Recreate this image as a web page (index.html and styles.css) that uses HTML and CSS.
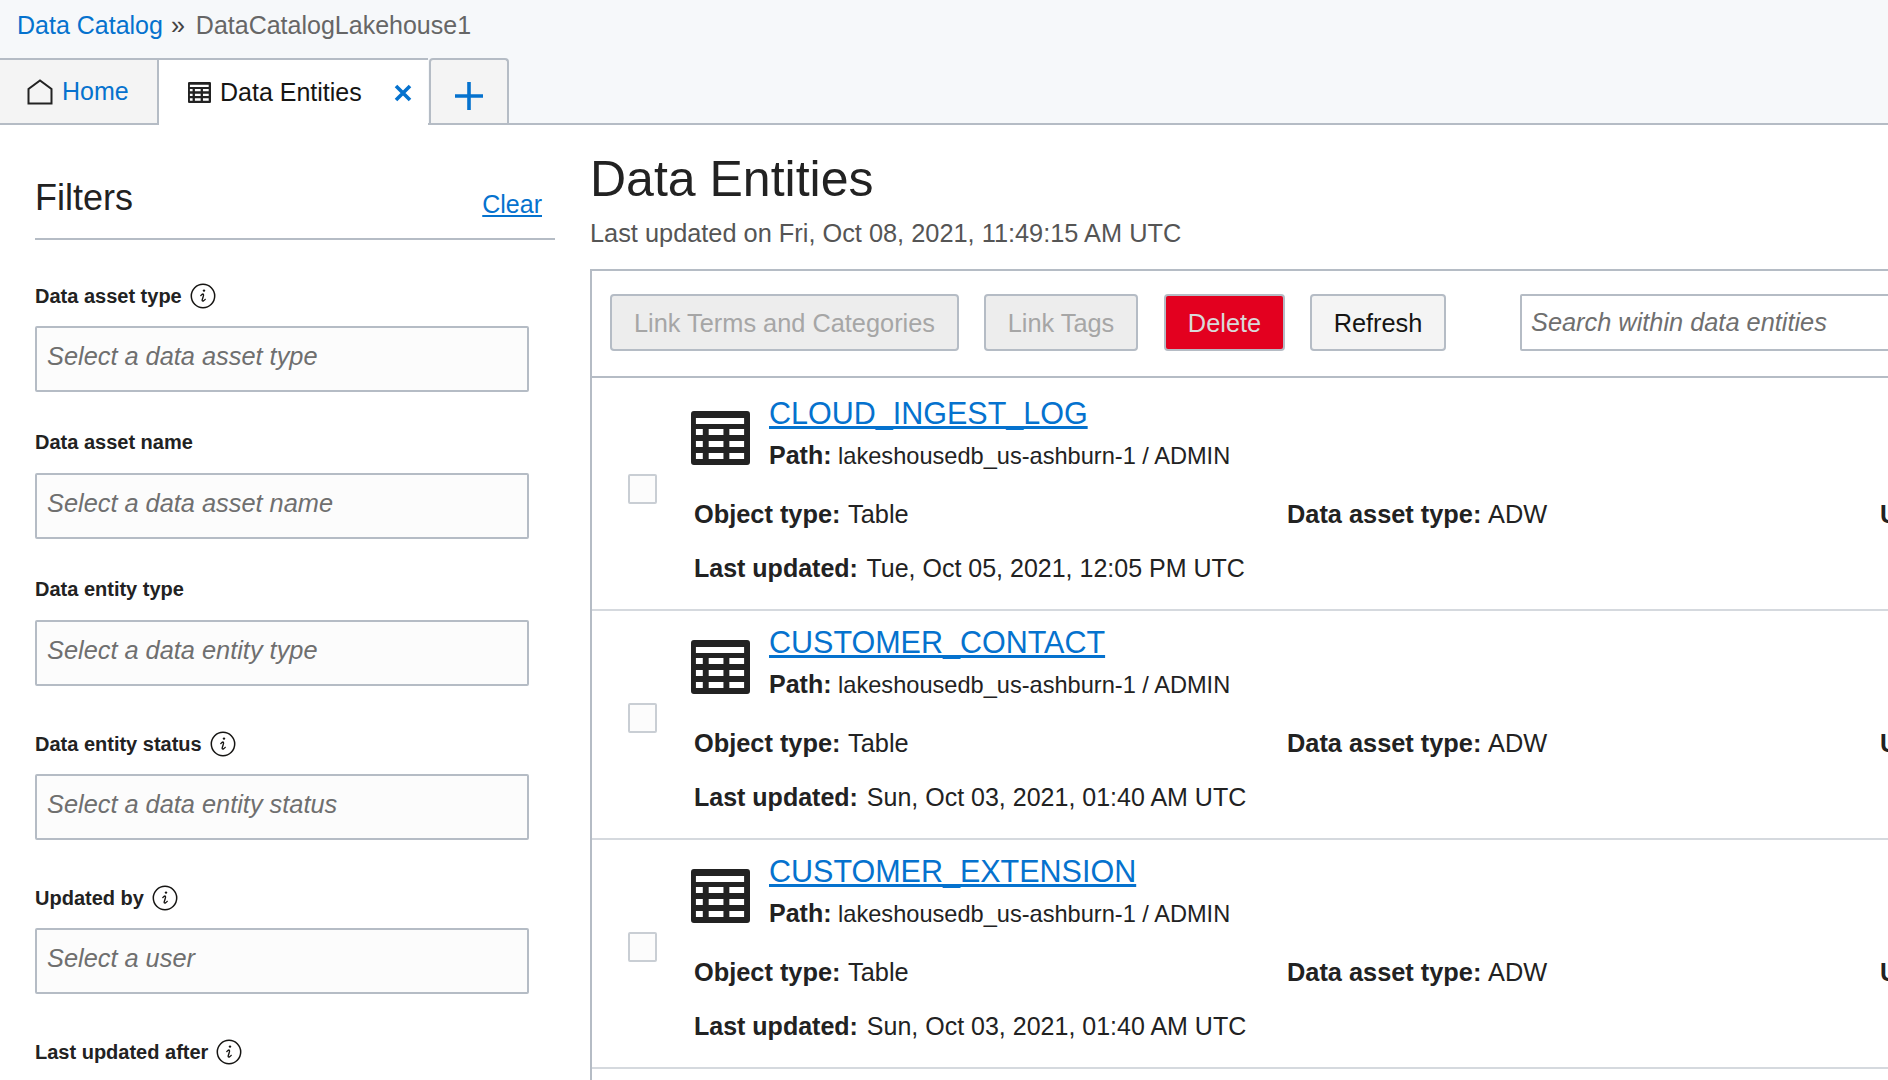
FILE: index.html
```html
<!DOCTYPE html>
<html lang="en">
<head>
    <meta charset="UTF-8">
    <meta name="viewport" content="width=device-width, initial-scale=1.0">
    <title>Data Entities</title>
    <link rel="stylesheet" href="styles.css">
</head>
<body>
    <svg class="defs" width="0" height="0">
        <symbol id="table-icon" viewBox="0 0 60 54" preserveAspectRatio="none">
            <path fill-rule="evenodd" fill="#222" d="M3 0H57Q60 0 60 3V51Q60 54 57 54H3Q0 54 0 51V3Q0 0 3 0ZM5 7V13H54V7ZM5 18V24H12V18ZM18 18V24H33V18ZM39 18V24H54V18ZM5 30V36H12V30ZM18 30V36H33V30ZM39 30V36H54V30ZM5 42V48H12V42ZM18 42V48H33V42ZM39 42V48H54V42Z"/>
        </symbol>
        <symbol id="info-icon" viewBox="0 0 26 26">
            <circle cx="13" cy="13" r="11.7" fill="none" stroke="#161513" stroke-width="1.5"/>
            <circle cx="14" cy="7.6" r="1.2" fill="#161513"/>
            <path d="M10.8 12.6Q12.6 10.6 13.4 11.2Q13.9 11.8 13 14.2L12.2 16.8Q12 18.4 13.2 18Q14.2 17.6 15.2 16.4" fill="none" stroke="#161513" stroke-width="1.4" stroke-linecap="round"/>
        </symbol>
    </svg>

    <div class="top">
        <div class="crumbs">
            <a href="#">Data Catalog</a>
            <span class="crumb-sep">»</span>
            <span class="crumb-current">DataCatalogLakehouse1</span>
        </div>
        <div class="tabs">
            <a href="#" class="tab tab-home">
                <svg class="home-icon" viewBox="0 0 26 26" width="26" height="26"><path d="M1.5 24.5V10L13 1.5L24.5 10V24.5Z" fill="none" stroke="#222" stroke-width="2"/></svg>
                Home
            </a>
            <div class="tab tab-active">
                <svg class="tab-table" width="23" height="21"><use href="#table-icon"/></svg>
                <span>Data Entities</span>
                <svg class="tab-close" viewBox="0 0 18 18" width="18" height="18"><path d="M2 2L16 16M16 2L2 16" stroke="#0572ce" stroke-width="3.6"/></svg>
            </div>
            <div class="tab tab-add">
                <svg viewBox="0 0 30 30" width="30" height="30"><path d="M15 1V29M1 15H29" stroke="#0572ce" stroke-width="3.6"/></svg>
            </div>
        </div>
    </div>

    <div class="page">
        <div class="filters">
            <div class="filters-head">
                <h2>Filters</h2>
                <a href="#">Clear</a>
            </div>
            <div class="filter">
                <label class="with-info">Data asset type <svg width="26" height="26"><use href="#info-icon"/></svg></label>
                <input type="text" placeholder="Select a data asset type">
            </div>
            <div class="filter">
                <label>Data asset name</label>
                <input type="text" placeholder="Select a data asset name">
            </div>
            <div class="filter">
                <label>Data entity type</label>
                <input type="text" placeholder="Select a data entity type">
            </div>
            <div class="filter">
                <label class="with-info">Data entity status <svg width="26" height="26"><use href="#info-icon"/></svg></label>
                <input type="text" placeholder="Select a data entity status">
            </div>
            <div class="filter">
                <label class="with-info">Updated by <svg width="26" height="26"><use href="#info-icon"/></svg></label>
                <input type="text" placeholder="Select a user">
            </div>
            <div class="filter">
                <label class="with-info">Last updated after <svg width="26" height="26"><use href="#info-icon"/></svg></label>
            </div>
        </div>

        <div class="main">
            <h1>Data Entities</h1>
            <p class="updated">Last updated on Fri, Oct 08, 2021, 11:49:15 AM UTC</p>
            <div class="panel">
                <div class="toolbar">
                    <button class="btn btn-terms" disabled>Link Terms and Categories</button>
                    <button class="btn btn-tags" disabled>Link Tags</button>
                    <button class="btn btn-delete">Delete</button>
                    <button class="btn btn-refresh">Refresh</button>
                    <input class="search" type="text" placeholder="Search within data entities">
                </div>

                <div class="row">
                    <input class="check" type="checkbox">
                    <div class="row-body">
                        <div class="row-title">
                            <svg class="row-icon" width="59" height="54"><use href="#table-icon"/></svg>
                            <div>
                                <a href="#" class="row-link">CLOUD_INGEST_LOG</a>
                                <div class="row-path"><b>Path:</b> lakeshousedb_us-ashburn-1 / ADMIN</div>
                            </div>
                        </div>
                        <div class="row-meta">
                            <div><b>Object type:</b> Table</div>
                            <div><b>Data asset type:</b> ADW</div>
                            <div><b>Updated by:</b></div>
                        </div>
                        <div class="row-last"><b>Last updated:</b> Tue, Oct 05, 2021, 12:05 PM UTC</div>
                    </div>
                </div>

                <div class="row">
                    <input class="check" type="checkbox">
                    <div class="row-body">
                        <div class="row-title">
                            <svg class="row-icon" width="59" height="54"><use href="#table-icon"/></svg>
                            <div>
                                <a href="#" class="row-link">CUSTOMER_CONTACT</a>
                                <div class="row-path"><b>Path:</b> lakeshousedb_us-ashburn-1 / ADMIN</div>
                            </div>
                        </div>
                        <div class="row-meta">
                            <div><b>Object type:</b> Table</div>
                            <div><b>Data asset type:</b> ADW</div>
                            <div><b>Updated by:</b></div>
                        </div>
                        <div class="row-last"><b>Last updated:</b> Sun, Oct 03, 2021, 01:40 AM UTC</div>
                    </div>
                </div>

                <div class="row">
                    <input class="check" type="checkbox">
                    <div class="row-body">
                        <div class="row-title">
                            <svg class="row-icon" width="59" height="54"><use href="#table-icon"/></svg>
                            <div>
                                <a href="#" class="row-link">CUSTOMER_EXTENSION</a>
                                <div class="row-path"><b>Path:</b> lakeshousedb_us-ashburn-1 / ADMIN</div>
                            </div>
                        </div>
                        <div class="row-meta">
                            <div><b>Object type:</b> Table</div>
                            <div><b>Data asset type:</b> ADW</div>
                            <div><b>Updated by:</b></div>
                        </div>
                        <div class="row-last"><b>Last updated:</b> Sun, Oct 03, 2021, 01:40 AM UTC</div>
                    </div>
                </div>
            </div>
        </div>
    </div>
</body>
</html>
```

FILE: styles.css
```css
html, body {
    height: 100%;
}
body {
    margin: 0;
    height: 1080px;
    overflow: hidden;
    background-color: #fff;
    color: #222;
    font-family: "Liberation Sans", Arial, sans-serif;
    font-size: 25.35px;
}
a {
    color: #0572ce;
}
.defs {
    position: absolute;
}

/* breadcrumb and tabs */
.top {
    height: 125px;
    box-sizing: border-box;
    background-color: #f6f8fa;
    border-bottom: 2px solid #b5bcc5;
    font-size: 25px;
}
.crumbs {
    height: 58px;
    box-sizing: border-box;
    padding: 10px 0 0 17px;
    line-height: 30px;
    display: flex;
}
.crumbs a {
    text-decoration: none;
}
.crumb-sep {
    margin: 0 11px 0 8px;
    color: #444;
}
.crumb-current {
    color: #666;
}
.tabs {
    display: flex;
    height: 67px;
    align-items: stretch;
}
.tab {
    display: flex;
    align-items: center;
    box-sizing: border-box;
    height: 65px;
    border-top: 2px solid #b5bcc5;
}
.tab-home {
    width: 159px;
    padding: 0 0 0 27px;
    gap: 9px;
    background-color: #f4f4f4;
    border-right: 2px solid #b5bcc5;
    text-decoration: none;
}
.tab-active {
    width: 269px;
    height: 67px;
    padding: 0 0 0 29px;
    background-color: #fff;
    color: #161513;
}
.tab-table {
    margin-right: 9px;
}
.tab-close {
    margin-left: 32px;
}
.tab-add {
    width: 80px;
    margin-left: 1px;
    justify-content: center;
    background-color: #f4f4f4;
    border: 2px solid #b5bcc5;
    border-bottom: none;
    border-radius: 4px 4px 0 0;
    padding-top: 8px;
}

/* page columns */
.page {
    display: flex;
}
.filters {
    width: 520px;
    margin-left: 35px;
    flex-shrink: 0;
}
.filters-head {
    height: 115px;
    box-sizing: border-box;
    display: flex;
    justify-content: space-between;
    align-items: flex-end;
    padding-bottom: 19px;
    border-bottom: 2px solid #b5bcc5;
    padding-right: 13px;
    margin-bottom: -2px;
}
.filters-head h2 {
    margin: 0;
    font-size: 36px;
    font-weight: normal;
}
.filters-head a {
    font-size: 25px;
}
.filter {
    width: 494px;
}
.filter label {
    display: flex;
    align-items: center;
    gap: 8px;
    height: 24px;
    font-size: 20px;
    font-weight: bold;
    margin-top: 38px;
    margin-bottom: 19px;
}
.filter label.with-info {
    height: 30px;
    margin-top: 43px;
    margin-bottom: 15px;
}
.filter input {
    display: block;
    width: 100%;
    height: 66px;
    box-sizing: border-box;
    padding: 0 10px 5px;
    border: 2px solid #b5bcc5;
    border-radius: 2px;
    background-color: #fcfcfc;
    font-family: inherit;
    font-size: 25.35px;
}
input::placeholder {
    color: #6f6f6f;
    font-style: italic;
    opacity: 1;
}

.main {
    flex: 1;
    min-width: 0;
    margin-left: 35px;
}
.main h1 {
    margin: 26px 0 0;
    font-size: 50px;
    line-height: 56px;
    font-weight: normal;
}
.updated {
    margin: 11px 0 0;
    line-height: 30px;
    color: #555;
}
.panel {
    margin-top: 21px;
    min-height: 812px;
    border-top: 2px solid #b5bcc5;
    border-left: 2px solid #b5bcc5;
    overflow: hidden;
}

/* toolbar */
.toolbar {
    height: 107px;
    box-sizing: border-box;
    padding: 0 0 2px 18px;
    display: flex;
    align-items: center;
    border-bottom: 2px solid #b5bcc5;
}
.btn {
    height: 57px;
    flex-shrink: 0;
    box-sizing: border-box;
    padding-top: 2px;
    border: 2px solid #b5bcc5;
    border-radius: 4px;
    font-family: inherit;
    font-size: 25.35px;
    background-color: #f4f4f4;
    color: #161513;
}
.btn[disabled] {
    background-color: #ededed;
    color: #a6a6a6;
}
.btn-terms {
    width: 349px;
}
.btn-tags {
    width: 154px;
    margin-left: 25px;
}
.btn-delete {
    width: 121px;
    margin-left: 26px;
    background-color: #e3001f;
    color: #d9d9d9;
}
.btn-refresh {
    width: 136px;
    margin-left: 25px;
}
.search {
    flex-shrink: 0;
    width: 500px;
    height: 57px;
    box-sizing: border-box;
    margin-left: 74px;
    padding: 0 9px;
    border: 2px solid #b5bcc5;
    border-radius: 2px;
    font-family: inherit;
    font-size: 25.35px;
}

/* result rows */
.row {
    height: 229px;
    box-sizing: border-box;
    display: flex;
    border-bottom: 2px solid #d5d9de;
}
.row:nth-child(2) {
    height: 233px;
    padding-top: 4px;
}
.check {
    appearance: none;
    flex-shrink: 0;
    width: 29px;
    height: 30px;
    margin: 92px 0 0 36px;
    border: 2px solid #c9ced4;
    border-radius: 2px;
    background-color: #fcfcfc;
}
.row-body {
    margin-left: 36px;
    width: 1300px;
    flex-shrink: 0;
    margin-top: 12px;
}
.row-title {
    display: flex;
    gap: 19px;
    margin-left: -2px;
}
.row-icon {
    margin-top: 17px;
    flex-shrink: 0;
}
.row-link {
    font-size: 30.5px;
    line-height: 38px;
    display: inline-block;
}
.row-path {
    margin-top: 7px;
    font-size: 23.6px;
    line-height: 32px;
}
.row-path b {
    font-size: 25px;
}
.row-meta {
    display: grid;
    grid-template-columns: 593px 593px 1fr;
    margin: 27px 0 0 1px;
    line-height: 30px;
    white-space: nowrap;
}
.row-meta b {
    margin-right: 1px;
}
.row-last {
    margin: 24px 0 0 1px;
    font-size: 25px;
    line-height: 30px;
}
.row-last b {
    margin-right: 2px;
}
```
